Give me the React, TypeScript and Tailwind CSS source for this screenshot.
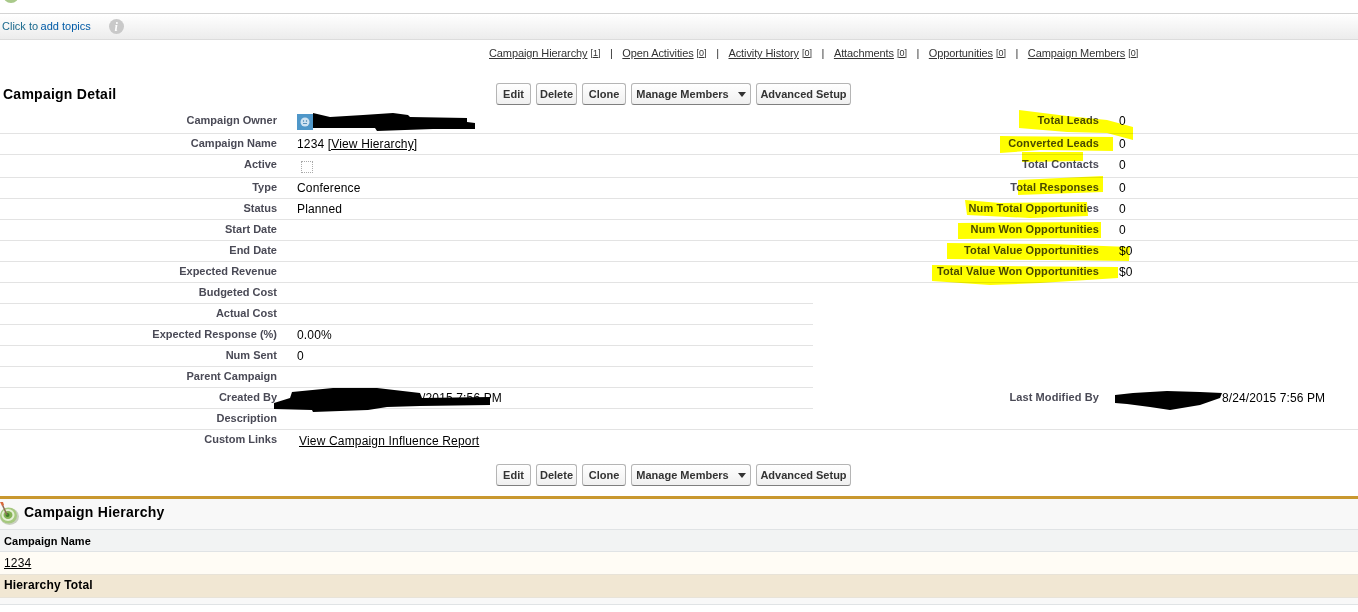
const related = [
  { name: "Campaign Hierarchy", count: "[1]" },
  { name: "Open Activities", count: "[0]" },
  { name: "Activity History", count: "[0]" },
  { name: "Attachments", count: "[0]" },
  { name: "Opportunities", count: "[0]" },
  { name: "Campaign Members", count: "[0]" },
];

function Btn({ children, w }: { children: React.ReactNode; w: string }) {
  return (
    <button
      type="button"
      className={`flex h-[22px] items-center justify-center rounded-[3px] border border-[#b5b5b5] border-b-[#7f7f7f] bg-gradient-to-b from-white to-[#f0f0f0] text-[11px] font-bold text-[#333] ${w}`}
    >
      {children}
    </button>
  );
}

function ButtonRow() {
  return (
    <div className="flex gap-[5px]">
      <Btn w="w-[35px]">Edit</Btn>
      <Btn w="w-[41px]">Delete</Btn>
      <Btn w="w-[44px]">Clone</Btn>
      <Btn w="w-[120px]">
        <span>Manage Members</span>
        <svg width="8" height="5" viewBox="0 0 8 5" className="ml-[9px]">
          <path d="M0 0h8L4 5z" fill="#333" />
        </svg>
      </Btn>
      <Btn w="w-[95px]">Advanced Setup</Btn>
    </div>
  );
}

function Row({
  label,
  value,
  rightLabel,
  rightValue,
  height = "h-[21px]",
  short,
}: {
  label: string;
  value?: React.ReactNode;
  rightLabel?: string;
  rightValue?: React.ReactNode;
  height?: string;
  short?: boolean;
}) {
  return (
    <div className={`flex border-b border-[#e3e3e3] ${height} ${short ? "w-[813px]" : "w-full"}`}>
      <div className="w-[277px] shrink-0 pt-[1px] text-right text-[11px] font-bold leading-[16px] text-[#4a4a56]">
        {label}
      </div>
      <div className="ml-[20px] w-[516px] shrink-0 pt-[2px] text-[12px] leading-[16px] tracking-[0.15px] text-black">
        {value}
      </div>
      {rightLabel && (
        <>
          <div className="w-[286px] shrink-0 pt-[1px] text-right text-[11px] font-bold leading-[16px] tracking-[0.1px] text-[#4a4a56]">
            {rightLabel}
          </div>
          <div className="ml-[20px] shrink-0 pt-[2px] text-[12px] leading-[16px] tracking-[0.1px] text-black">
            {rightValue}
          </div>
        </>
      )}
    </div>
  );
}

function TargetIcon() {
  return (
    <svg width="20" height="24" viewBox="0 0 20 24" className="shrink-0">
      <ellipse cx="9.500" cy="14.500" rx="9.500" ry="8.500" fill="#c9cfc0" />
      <ellipse cx="8.500" cy="13.500" rx="8.500" ry="8" fill="#a6c97f" />
      <ellipse cx="8" cy="13" rx="6.500" ry="6" fill="#e6f0d6" />
      <ellipse cx="8" cy="13" rx="4.500" ry="4" fill="#86b356" />
      <ellipse cx="7.500" cy="13" rx="2" ry="2" fill="#3f7f26" />
      <path d="M7 13L2.500 3" stroke="#8a6a55" strokeWidth="1.500" />
      <path d="M0 0h3l1 3-2 1z" fill="#d9683c" />
    </svg>
  );
}

export default function App() {
  return (
    <div className="relative h-[612px] w-full overflow-hidden bg-white font-['Liberation_Sans',Arial,sans-serif]">
      {/* Sliver of the page icon cut off at the top */}
      <div className="h-[13px]">
        <svg width="24" height="4" viewBox="0 0 24 4" className="block">
          <ellipse cx="11" cy="-5" rx="8" ry="8" fill="#a9c98a" />
        </svg>
      </div>

      {/* Topics bar */}
      <div className="flex h-[27px] items-center border-y border-[#d4d4d4] border-b-[#dcdcdc] bg-gradient-to-b from-white to-[#ececec] pl-[2px]">
        <span className="text-[11px] text-[#1a6a8e]">Click to</span>
        <span className="ml-[2.500px] text-[11px] text-[#015ba7]">add topics</span>
        <span className="ml-[18px] flex h-[15px] w-[15px] items-center justify-center rounded-full bg-[#c9c9c9] font-['Liberation_Serif',serif] text-[12px] font-bold italic text-white">
          i
        </span>
      </div>

      {/* Related list links */}
      <div className="flex h-[28px] items-center pb-[1px] pl-[489px] text-[11px] text-[#333]">
        {related.map((r, i) => (
          <div key={r.name} className="flex items-center">
            {i > 0 && <span className="mx-[9.500px] text-[#333]">|</span>}
            <span className="tracking-[-0.1px] underline">{r.name}</span>
            <span className="ml-[3px] text-[9px] underline">{r.count}</span>
          </div>
        ))}
      </div>

      {/* Detail header */}
      <div className="flex h-[45px] items-center pt-[7px]">
        <h2 className="w-[496px] pl-[3px] text-[14px] font-bold leading-none tracking-[0.25px] text-black">
          Campaign Detail
        </h2>
        <ButtonRow />
      </div>

      {/* Detail fields */}
      <div className="mt-[-2px]">
        <Row
          label="Campaign Owner"
          height="h-[23px]"
          value={
            <span className="mt-[1px] flex h-[16px] w-[16px] items-center justify-center bg-[#4f97c9]">
              <svg width="10" height="10" viewBox="0 0 10 10">
                <circle cx="5" cy="5" r="4.500" fill="#cfe3f2" />
                <circle cx="3.500" cy="4" r="0.700" fill="#3b7fae" />
                <circle cx="6.500" cy="4" r="0.700" fill="#3b7fae" />
                <path d="M3 6.500h4" stroke="#3b7fae" strokeWidth="0.800" />
              </svg>
            </span>
          }
          rightLabel="Total Leads"
          rightValue="0"
        />
        <Row
          label="Campaign Name"
          value={
            <>
              1234 <span className="underline">[View Hierarchy]</span>
            </>
          }
          rightLabel="Converted Leads"
          rightValue="0"
        />
        <Row
          label="Active"
          height="h-[23px]"
          value={<span className="ml-[4px] mt-[4px] block h-[12px] w-[12px] border border-dotted border-[#aaa]" />}
          rightLabel="Total Contacts"
          rightValue="0"
        />
        <Row label="Type" value="Conference" rightLabel="Total Responses" rightValue="0" />
        <Row label="Status" value="Planned" rightLabel="Num Total Opportunities" rightValue="0" />
        <Row label="Start Date" rightLabel="Num Won Opportunities" rightValue="0" />
        <Row label="End Date" rightLabel="Total Value Opportunities" rightValue="$0" />
        <Row label="Expected Revenue" rightLabel="Total Value Won Opportunities" rightValue="$0" />
        <Row label="Budgeted Cost" short />
        <Row label="Actual Cost" short />
        <Row label="Expected Response (%)" value="0.00%" short />
        <Row label="Num Sent" value="0" short />
        <Row label="Parent Campaign" short />
        <Row
          label="Created By"
          value={<span className="ml-[125px]">/2015 7:56 PM</span>}
          rightLabel="Last Modified By"
          rightValue={<span className="ml-[103px]">8/24/2015 7:56 PM</span>}
          short
        />
        <Row label="Description" />
        <div className="flex h-[34px]">
          <div className="w-[277px] pt-[1px] text-right text-[11px] font-bold leading-[16px] text-[#4a4a56]">
            Custom Links
          </div>
          <div className="ml-[22px] pt-[3px] text-[12px] leading-[16px] tracking-[0.17px] text-black underline">
            View Campaign Influence Report
          </div>
        </div>
      </div>

      {/* Lower buttons */}
      <div className="flex pl-[496px]">
        <ButtonRow />
      </div>

      {/* Campaign Hierarchy related list */}
      <div className="mt-[10px] border-t-[3px] border-[#c9982f]">
        <div className="flex h-[30px] items-center bg-[#f8f8f8]">
          <TargetIcon />
          <h3 className="mb-[3px] ml-[4px] text-[14px] font-bold tracking-[0.25px] text-black">Campaign Hierarchy</h3>
        </div>
        <div className="flex h-[23px] items-center border-y border-[#e0e3e5] bg-[#f2f3f3] pl-[4px] pt-[1px] text-[11px] font-bold tracking-[0.05px] text-black">
          Campaign Name
        </div>
        <div className="flex h-[22px] items-center bg-[#fffcf5] pl-[4px] text-[12px] tracking-[0.15px] text-black underline">
          1234
        </div>
        <div className="flex h-[24px] items-center border-y border-[#e8e3d8] bg-[#f1e7d3] pb-[2px] pl-[4px] text-[12px] font-bold tracking-[0.15px] text-black">
          Hierarchy Total
        </div>
        <div className="h-[7px] border-b border-[#e0e3e5] bg-[#f8f8f8]" />
      </div>

      {/* Marker strokes drawn on the screenshot */}
      <svg className="pointer-events-none absolute inset-0 mix-blend-multiply" width="1358" height="612">
        <g fill="#ffff00">
          <path d="M1019 110L1067 116L1107 120L1133 127V140L1107 133L1067 132L1019 128Z" />
          <path d="M1000 136L1113 137V151L1040 150L1000 153Z" />
          <path d="M1022 152H1083V161L1022 162Z" />
          <path d="M1018 180L1103 176V192L1018 195Z" />
          <path d="M965 200L1000 203L1087 202L1088 216L1030 218L967 215Z" />
          <path d="M958 223L1101 222V238L958 239Z" />
          <path d="M947 243L1050 244L1130 247L1129 261L1050 260L947 259Z" />
          <path d="M932 265L1000 266L1118 267V278L1040 283L990 285L932 281Z" />
        </g>
      </svg>
      <svg className="pointer-events-none absolute inset-0" width="1358" height="612">
        <g fill="#000">
          <path d="M313 113L330 117L363 115L393 113L408 115L410 117L467 118V122L475 123V129L433 129L377 131L375 128H313Z" />
          <path d="M274 403L290 398L292 392L333 388L377 388L420 393L422 398L490 397V405L420 406L387 407L368 410L313 412L312 410L274 409Z" />
          <path d="M1115 395L1133 393L1167 391L1200 392L1222 393L1220 398L1200 405L1170 410L1150 407L1127 404L1115 403Z" />
        </g>
      </svg>
    </div>
  );
}
